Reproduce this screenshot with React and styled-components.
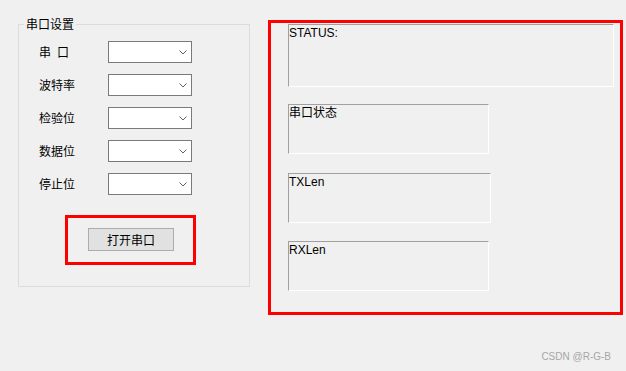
import React from 'react';
import styled, { createGlobalStyle } from 'styled-components';

const GlobalStyle = createGlobalStyle`
  html, body {
    margin: 0;
    padding: 0;
    background: #f0f0f0;
    overflow: hidden;
  }
  body {
    font-family: "Liberation Sans", "Noto Sans CJK SC", sans-serif;
    font-size: 12px;
    color: #000;
  }
`;

const Page = styled.div`
  position: relative;
  display: flex;
  align-items: flex-start;
  gap: 18px;
  width: 626px;
  height: 371px;
  box-sizing: border-box;
  padding: 17px 0 0 18px;
`;

const Group = styled.fieldset`
  margin: 0;
  padding: 0 0 21px 0;
  width: 232px;
  box-sizing: border-box;
  border: 1px solid #dcdcdc;
  min-inline-size: 0;
`;

const Legend = styled.legend`
  margin-left: 5px;
  padding: 0 2px;
  font-size: 12px;
  line-height: 14px;
  font-family: "Noto Sans CJK SC", sans-serif;
`;

const Form = styled.div`
  display: flex;
  flex-direction: column;
  padding: 10px 0 0 20px;
`;

const Row = styled.div`
  display: flex;
  align-items: center;
  margin-top: ${p => p.$mt}px;
`;

const Label = styled.span`
  width: 69px;
  font-family: "Noto Sans CJK SC", sans-serif;
  font-size: 12px;
  line-height: 14px;
  white-space: pre;
`;

const Combo = styled.div`
  width: 84px;
  height: 22px;
  box-sizing: border-box;
  border: 1px solid #7a7a7a;
  background: #fff;
  display: flex;
  align-items: center;
  justify-content: flex-end;
  padding-right: 4px;
`;

const Highlight = styled.div`
  width: 131px;
  height: 50px;
  box-sizing: border-box;
  border: 3px solid #ff0000;
  margin: 20px 0 0 26px;
  display: flex;
  align-items: center;
  justify-content: center;
  padding: 0 0 1px 1px;
`;

const Button = styled.button`
  width: 86px;
  height: 23px;
  box-sizing: border-box;
  border: 1px solid #adadad;
  background: #e1e1e1;
  padding: 0;
  font-family: "Noto Sans CJK SC", sans-serif;
  font-size: 12px;
  line-height: 14px;
  color: #000;
`;

const RedPanel = styled.div`
  width: 355px;
  height: 295px;
  margin-top: 3px;
  box-sizing: border-box;
  border: 3px solid #ff0000;
  padding: 1px 0 0 17px;
  display: flex;
  flex-direction: column;
  align-items: flex-start;
`;

const Sunken = styled.div`
  width: ${p => p.$w}px;
  height: ${p => p.$h}px;
  margin-top: ${p => p.$mt}px;
  box-sizing: border-box;
  border-top: 1px solid #a0a0a0;
  border-left: 1px solid #a0a0a0;
  border-right: 1px solid #ffffff;
  border-bottom: 1px solid #ffffff;
  font-size: 12px;
  line-height: 14px;
  padding: 1px 0 0 0;
`;

const Watermark = styled.div`
  position: absolute;
  right: 15px;
  bottom: 8px;
  font-family: "Liberation Sans", sans-serif;
  font-size: 10px;
  line-height: 12px;
  color: #a6a6a6;
`;

const Chevron = () => (
  <svg width="8" height="5" viewBox="0 0 8 5">
    <polyline points="0.5,0.5 4,4 7.5,0.5" fill="none" stroke="#606060" strokeWidth="1" />
  </svg>
);

const fields = ['串\u2002口', '波特率', '检验位', '数据位', '停止位'];

const App = () => (
  <>
    <GlobalStyle />
    <Page>
      <Group>
        <Legend>串口设置</Legend>
        <Form>
          {fields.map((f, i) => (
            <Row key={f} $mt={i === 0 ? 0 : 11}>
              <Label>{f}</Label>
              <Combo>
                <Chevron />
              </Combo>
            </Row>
          ))}
          <Highlight>
            <Button>打开串口</Button>
          </Highlight>
        </Form>
      </Group>
      <RedPanel>
        <Sunken $w={326} $h={63} $mt={0}>STATUS:</Sunken>
        <Sunken $w={201} $h={50} $mt={17}>串口状态</Sunken>
        <Sunken $w={203} $h={50} $mt={19}>TXLen</Sunken>
        <Sunken $w={201} $h={50} $mt={18}>RXLen</Sunken>
      </RedPanel>
      <Watermark>CSDN @R-G-B</Watermark>
    </Page>
  </>
);

export default App;
